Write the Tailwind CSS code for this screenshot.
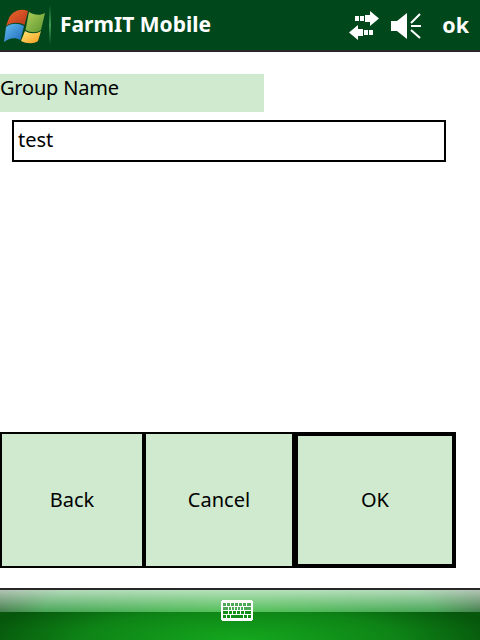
<!DOCTYPE html>
<html lang="en">
<head>
    <meta charset="UTF-8">
    <title>FarmIT Mobile</title>
    <script src="https://cdn.jsdelivr.net/npm/@tailwindcss/browser@4"></script>
</head>
<body class="bg-white w-[480px] h-[640px] overflow-hidden flex flex-col font-['Noto_Sans',sans-serif] text-black">
    <!-- Title bar -->
    <div class="h-[52px] shrink-0 bg-[#00481b] border-b-2 border-[#282828] flex items-center text-white">
        <svg class="ml-[4px] w-[42px] h-[42px] shrink-0" viewBox="0 0 42 42">
            <defs>
                <linearGradient id="r" x1="0" y1="0" x2="1" y2="1"><stop offset="0" stop-color="#ea6a2c"/><stop offset="1" stop-color="#b8341c"/></linearGradient>
                <linearGradient id="g" x1="0" y1="0" x2="1" y2="1"><stop offset="0" stop-color="#b0cf58"/><stop offset="1" stop-color="#5c9430"/></linearGradient>
                <linearGradient id="b" x1="0" y1="0" x2="1" y2="1"><stop offset="0" stop-color="#62bcf0"/><stop offset="1" stop-color="#1c68b8"/></linearGradient>
                <linearGradient id="y" x1="0" y1="0" x2="1" y2="1"><stop offset="0" stop-color="#fde878"/><stop offset="1" stop-color="#f49c1c"/></linearGradient>
            </defs>
            <path d="M5 14 C9 7 16 4 24 7 L20.500 21 C15 18 8 18 2 22 Z" fill="url(#r)"/>
            <path d="M25 8 C30 11 36 12 41 9 L37 26 C33 29 27 29 21.500 26 Z" fill="url(#g)"/>
            <path d="M2 23 C7 19 14 19 20 22 L16.500 36 C11 33 5 34 0 38 Z" fill="url(#b)"/>
            <path d="M21 27 C26 30 33 30 37 27 L34 37 C30 40 23 40 17 37 Z" fill="url(#y)"/>
        </svg>
        <div class="ml-[3px] w-[2px] h-[40px] bg-gradient-to-b from-transparent via-[#3f9a52] to-transparent shrink-0"></div>
        <span class="ml-[9px] text-[21px] font-bold">FarmIT Mobile</span>
        <div class="ml-auto flex items-center">
            <svg class="w-[32px] h-[30px]" viewBox="0 0 32 30" fill="#fff">
                <path d="M21 1 L30 8.500 L21 16 L21 12 L16 12 L16 5 L21 5 Z"/>
                <rect x="6" y="6" width="4" height="5"/><rect x="11" y="6" width="4" height="5"/>
                <path d="M9 15 L0 22.500 L9 30 L9 26 L14 26 L14 19 L9 19 Z"/>
                <rect x="15" y="20" width="4" height="5"/><rect x="20" y="20" width="4" height="5"/>
            </svg>
            <svg class="ml-[10px] w-[32px] h-[30px]" viewBox="0 0 32 30" fill="#fff">
                <path d="M0 11 L6 11 L16 3 L16 29 L6 21 L0 21 Z"/>
                <path d="M20 13 L29 4 M20 16 L30 16 M20 20 L29 28" stroke="#fff" stroke-width="2" fill="none"/>
            </svg>
            <span class="ml-[19px] mr-[11px] text-[21.500px] leading-[30px] font-bold">ok</span>
        </div>
    </div>

    <!-- Form -->
    <div class="flex-1 flex flex-col">
        <div class="mt-[22px] w-[264px] h-[38px] bg-[#cfeace] text-[20px] leading-[28px] tracking-[-0.2px]">Group Name</div>
        <div class="mt-[8px] ml-[12px] w-[434px] h-[42px] border-2 border-black flex items-center px-[4px] pb-[2px] text-[20px]">test</div>
        <div class="mt-auto mb-[20px] flex h-[136px] w-[456px] text-[20px]">
            <div class="w-[144px] bg-[#cfeace] border-2 border-black flex items-center justify-center">Back</div>
            <div class="w-[150px] bg-[#cfeace] border-2 border-black flex items-center justify-center">Cancel</div>
            <div class="w-[162px] bg-[#cfeace] border-4 border-black flex items-center justify-center">OK</div>
        </div>
    </div>

    <!-- Bottom bar -->
    <div class="h-[52px] shrink-0 border-t-2 border-[#282828] relative bg-[radial-gradient(ellipse_260px_50px_at_50%_100%,#14a81e,#0e8416_60%,#06560c)]">
        <div class="h-[22px] bg-[radial-gradient(ellipse_300px_70px_at_50%_100%,#35b83c,#28963a_65%,#1c2a1c)]">
            <div class="h-full bg-gradient-to-b from-white/65 to-white/15"></div>
        </div>
        <svg class="absolute left-[221px] top-[10px] w-[32px] h-[21px]" viewBox="0 0 32 21">
            <path d="M1 0 H31 V1 H32 V20 H31 V21 H1 V20 H0 V1 H1 Z" fill="#fff"/>
            <g fill="#4fa858">
                <rect x="2" y="3" width="3" height="3"/><rect x="6" y="3" width="3" height="3"/><rect x="10" y="3" width="3" height="3"/><rect x="14" y="3" width="3" height="3"/><rect x="18" y="3" width="3" height="3"/><rect x="22" y="3" width="3" height="3"/><rect x="26" y="3" width="4" height="3"/>
                <rect x="2" y="7" width="5" height="3"/><rect x="8" y="7" width="2" height="3"/><rect x="11" y="7" width="2" height="3"/><rect x="14" y="7" width="2" height="3"/><rect x="17" y="7" width="2" height="3"/><rect x="20" y="7" width="2" height="3"/><rect x="23" y="7" width="7" height="3"/>
            </g>
            <g fill="#0f8f18">
                <rect x="2" y="11" width="5" height="3"/><rect x="8" y="11" width="3" height="3"/><rect x="12" y="11" width="3" height="3"/><rect x="16" y="11" width="3" height="3"/><rect x="20" y="11" width="3" height="3"/><rect x="24" y="11" width="6" height="3"/>
                <rect x="2" y="15" width="3" height="3"/><rect x="6" y="15" width="3" height="3"/><rect x="10" y="15" width="12" height="3"/><rect x="23" y="15" width="3" height="3"/><rect x="27" y="15" width="3" height="3"/>
            </g>
        </svg>
    </div>
</body>
</html>
